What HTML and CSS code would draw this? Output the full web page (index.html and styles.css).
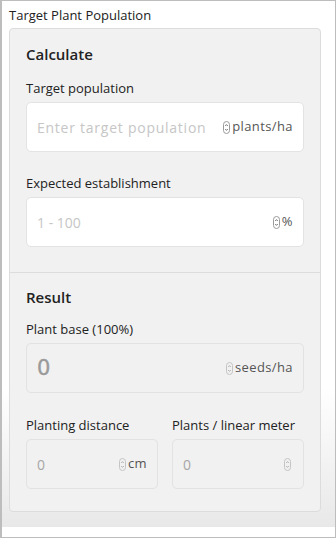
FILE: index.html
```html
<!DOCTYPE html>
<html>
<head>
<meta charset="utf-8">
<link rel="stylesheet" href="styles.css">
</head>
<body>
<div class="frame">
  <div class="scroll">
    <div class="title">Target Plant Population</div>
    <div class="card">
      <section class="section">
        <h2 class="heading">Calculate</h2>
        <div class="field">
          <label class="label">Target population</label>
          <div class="input">
            <span class="placeholder wide">Enter target population</span>
            <svg class="spin" width="7" height="13" viewBox="0 0 7 13"><rect x="0.5" y="0.5" width="6" height="12" rx="3" fill="none" stroke="#9a9a9a"/><path d="M2.2 5 L3.5 3.6 L4.8 5" fill="none" stroke="#666" stroke-width="0.9"/><path d="M2.2 8 L3.5 9.4 L4.8 8" fill="none" stroke="#666" stroke-width="0.9"/></svg>
            <span class="unit">plants/ha</span>
          </div>
        </div>
        <div class="field">
          <label class="label">Expected establishment</label>
          <div class="input">
            <span class="placeholder">1 - 100</span>
            <svg class="spin" width="7" height="13" viewBox="0 0 7 13"><rect x="0.5" y="0.5" width="6" height="12" rx="3" fill="none" stroke="#9a9a9a"/><path d="M2.2 5 L3.5 3.6 L4.8 5" fill="none" stroke="#666" stroke-width="0.9"/><path d="M2.2 8 L3.5 9.4 L4.8 8" fill="none" stroke="#666" stroke-width="0.9"/></svg>
            <span class="unit">%</span>
          </div>
        </div>
      </section>
      <section class="section result">
        <h2 class="heading">Result</h2>
        <div class="field">
          <label class="label">Plant base (100%)</label>
          <div class="input disabled">
            <span class="value big">0</span>
            <svg class="spin" width="7" height="13" viewBox="0 0 7 13"><rect x="0.5" y="0.5" width="6" height="12" rx="3" fill="none" stroke="#c4c4c4"/><path d="M2.2 5 L3.5 3.6 L4.8 5" fill="none" stroke="#aaa" stroke-width="0.9"/><path d="M2.2 8 L3.5 9.4 L4.8 8" fill="none" stroke="#aaa" stroke-width="0.9"/></svg>
            <span class="unit">seeds/ha</span>
          </div>
        </div>
        <div class="row">
          <div class="field">
            <label class="label">Planting distance</label>
            <div class="input disabled">
              <span class="value">0</span>
              <svg class="spin" width="7" height="13" viewBox="0 0 7 13"><rect x="0.5" y="0.5" width="6" height="12" rx="3" fill="none" stroke="#c4c4c4"/><path d="M2.2 5 L3.5 3.6 L4.8 5" fill="none" stroke="#aaa" stroke-width="0.9"/><path d="M2.2 8 L3.5 9.4 L4.8 8" fill="none" stroke="#aaa" stroke-width="0.9"/></svg>
              <span class="unit">cm</span>
            </div>
          </div>
          <div class="field">
            <label class="label">Plants / linear meter</label>
            <div class="input disabled">
              <span class="value">0</span>
              <svg class="spin" width="7" height="13" viewBox="0 0 7 13"><rect x="0.5" y="0.5" width="6" height="12" rx="3" fill="none" stroke="#c4c4c4"/><path d="M2.2 5 L3.5 3.6 L4.8 5" fill="none" stroke="#aaa" stroke-width="0.9"/><path d="M2.2 8 L3.5 9.4 L4.8 8" fill="none" stroke="#aaa" stroke-width="0.9"/></svg>
            </div>
          </div>
        </div>
      </section>
    </div>
    <div class="fade"></div>
  </div>
</div>
</body>
</html>
```

FILE: styles.css
```css
* { box-sizing: border-box; }
html, body { margin: 0; padding: 0; background: #fff; }
body { font-family: "Open Sans", "DejaVu Sans", sans-serif; color: #222; }

.frame {
  width: 336px;
  height: 538px;
  border: 1px solid #bdbdbd;
  border-left: 2px solid #bdbdbd;
  overflow: hidden;
}
.scroll {
  position: relative;
  height: 526px;
  padding: 5px 14px 0 7px;
  background: #fff;
}
.title {
  font-size: 13px;
  line-height: 18px;
  height: 22px;
  color: #222;
}
.card {
  position: relative;
  z-index: 1;
  background: #f1f1f1;
  border: 1px solid #dcdcdc;
  border-radius: 4px;
}
.section {
  padding: 15px 16px 25px;
}
.result {
  border-top: 1px solid #dcdcdc;
  padding-top: 14px;
  padding-bottom: 22px;
}
.heading {
  margin: 0;
  font-size: 15px;
  line-height: 20px;
  font-weight: 600;
  color: #222;
}
.field { display: flex; flex-direction: column; }
.heading + .field { margin-top: 15px; }
.field + .field { margin-top: 22px; }
.result .heading + .field { margin-top: 13px; }
.row { display: grid; grid-template-columns: 1fr 1fr; gap: 14px; margin-top: 23px; }
.row .field { margin-top: 0; }
.label {
  font-size: 13px;
  line-height: 18px;
  color: #222;
  margin-bottom: 5px;
}
.input {
  height: 50px;
  background: #fff;
  border: 1px solid #e3e3e3;
  border-radius: 5px;
  display: flex;
  align-items: center;
  padding: 0 10px 0 10px;
}
.input.disabled { background: #f1f1f1; border-color: #e2e2e2; }
.placeholder {
  flex: 1;
  font-size: 14px;
  color: #c6c6c6;
  white-space: nowrap;
  overflow: hidden;
}
.placeholder.wide { letter-spacing: 0.75px; }
.value {
  flex: 1;
  font-size: 14px;
  color: #a6a6a6;
}
.value.big {
  font-family: "DejaVu Sans", sans-serif;
  font-size: 21px;
  font-weight: 400;
  color: #9a9a9a;
  -webkit-text-stroke: 0.4px #9a9a9a;
}
.spin { flex: none; margin-right: 2px; }
.unit {
  font-size: 13px;
  letter-spacing: 0.4px;
  color: #555;
  margin-top: -3px;
}
.fade {
  position: absolute;
  left: 0; right: 0; bottom: 0;
  height: 140px;
  background: linear-gradient(to bottom, rgba(0,0,0,0), rgba(0,0,0,0.09));
  z-index: 0;
  pointer-events: none;
}
```
